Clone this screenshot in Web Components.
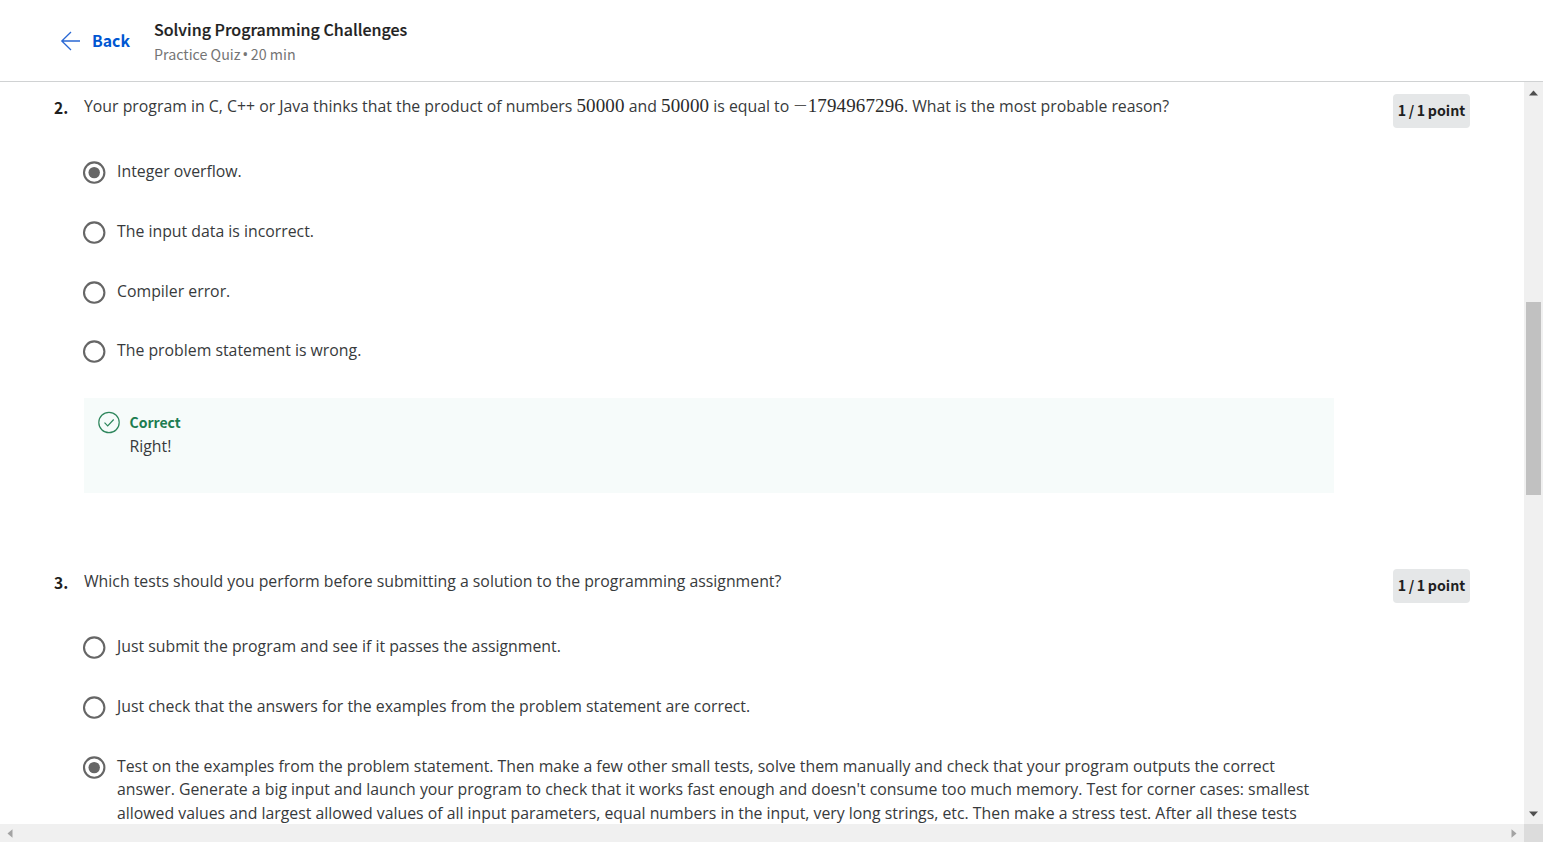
<!DOCTYPE html>
<html lang="en">
<head>
<meta charset="utf-8">
<title>Solving Programming Challenges</title>
<style>
html,body{margin:0;height:100%;overflow:hidden;background:#fff}
body{font-family:"Open Sans","Noto Sans",sans-serif;font-size:15.83px;color:#373a3c}
quiz-page{--ui:"Noto Sans CJK SC","Open Sans",sans-serif}
.sep{font-family:"Open Sans",sans-serif;font-size:16px;line-height:1;margin:0 -.7px 0 -1.4px}
</style>
</head>
<body>
<quiz-page>
  <quiz-header slot="header">
    <span slot="title">Solving Programming Challenges</span>
    <span slot="meta">Practice Quiz <span class="sep">•</span> 20 min</span>
  </quiz-header>
  <quiz-question number="2.">
    <span slot="prompt">Your program in C, C++ or Java thinks that the product of numbers <math-num>50000</math-num> and <math-num>50000</math-num> is equal to <math-num><math-minus>−</math-minus>1794967296</math-num>. What is the most probable reason?</span>
    <quiz-option checked>Integer overflow.</quiz-option>
    <quiz-option>The input data is incorrect.</quiz-option>
    <quiz-option>Compiler error.</quiz-option>
    <quiz-option>The problem statement is wrong.</quiz-option>
    <quiz-feedback slot="feedback"><span slot="title">Correct</span>Right!</quiz-feedback>
  </quiz-question>
  <quiz-question number="3.">
    <span slot="prompt">Which tests should you perform before submitting a solution to the programming assignment?</span>
    <quiz-option>Just submit the program and see if it passes the assignment.</quiz-option>
    <quiz-option>Just check that the answers for the examples from the problem statement are correct.</quiz-option>
    <quiz-option checked>Test on the examples from the problem statement. Then make a few other small tests, solve them manually and check that your program outputs the correct<br>answer. Generate a big input and launch your program to check that it works fast enough and doesn't consume too much memory. Test for corner cases: smallest<br>allowed values and largest allowed values of all input parameters, equal numbers in the input, very long strings, etc. Then make a stress test. After all these tests</quiz-option>
  </quiz-question>
</quiz-page>
<script>
const define=(name,html)=>{
  const t=document.createElement('template');t.innerHTML=html;
  customElements.define(name,class extends HTMLElement{
    constructor(){super();this.attachShadow({mode:'open'}).append(t.content.cloneNode(true));}
    connectedCallback(){const n=this.shadowRoot.querySelector('.number');if(n)n.textContent=this.getAttribute('number');}
  });
};
define('quiz-page',`<style>
:host{display:grid;grid-template:82px minmax(0,1fr) 18px/minmax(0,1fr) 19px;width:100%;height:842px;overflow:hidden}
header{grid-column:1/3;border-bottom:1px solid #d0d2d3;box-sizing:border-box;background:#fff}
main{overflow:hidden}
.v,.h{background:#f0f0f0;display:flex;align-items:center;justify-content:space-between;box-sizing:border-box}
.v{flex-direction:column;padding:8px 0 7px}.h{padding:0 7px 0 7px}
.thumb{width:15px;height:193px;background:#c1c1c1;margin:0 0 110px}
.corner{background:#dcdcdc}svg{display:block}
</style><header><slot name="header"></slot></header><main><slot></slot></main>
<div class="v"><svg width="9" height="6"><path d="M0 5.5 4.5 .5 9 5.5z" fill="#505050"/></svg><div class="thumb"></div><svg width="9" height="6"><path d="M0 0.5H9L4.5 5.5z" fill="#505050"/></svg></div>
<div class="h"><svg width="6" height="9"><path d="M5.5 .3V8.7L.5 4.5z" fill="#a3a3a3"/></svg><svg width="6" height="9"><path d="M.5 .3V8.7L5.5 4.5z" fill="#a3a3a3"/></svg></div><div class="corner"></div>`);
define('quiz-header',`<style>
:host{display:flex;height:81px;padding-left:60px;box-sizing:border-box;font-family:var(--ui)}
.back{display:flex;align-items:center;width:94px;color:#0056d2;font-weight:700;font-size:15.8px}
.back svg{margin-right:12px;flex:none}.back span{line-height:24px;margin-top:1px}
.info{padding-top:17px}.title{color:#1f1f1f;font-size:16.02px;font-weight:500;-webkit-text-stroke:.2px #1f1f1f;line-height:24px;white-space:nowrap}
.meta{color:#757575;font-size:14.25px;line-height:24px;height:24px;margin-top:1px;white-space:nowrap}
</style><div class="back"><svg width="20" height="20" viewBox="0 0 20 20" fill="none" stroke="#2a68d4" stroke-width="1.3"><path d="M1.5 10H20M11 1 1.8 10 11 19"/></svg><span>Back</span></div>
<div class="info"><div class="title"><slot name="title"></slot></div><div class="meta"><slot name="meta"></slot></div></div>`);
define('math-num',`<style>:host{display:inline;font:19px/1 "Liberation Serif",serif;letter-spacing:.12px;color:#2b2b2b}</style><slot></slot>`);
define('math-minus',`<style>:host{display:inline-block;width:14.4px;text-align:center;color:#555}span{display:inline-block;transform:scaleX(1.28)}</style><span><slot></slot></span>`);
define('quiz-question',`<style>
:host{display:grid;grid-template-columns:30px 1250px auto;padding-left:54px;height:475px;box-sizing:border-box;align-content:start}
.number{font:700 15.6px/24px var(--ui);color:#1f1f1f;padding-top:13px}
.prompt{line-height:24px;padding-top:12px;white-space:nowrap}
.points{justify-self:start;margin:12px 0 0 59px;width:77px;height:33.5px;border-radius:4px;background:#e5e7e8;color:#1f1f1f;font:700 14.2px/33px var(--ui);word-spacing:-.6px;text-align:center;white-space:nowrap}
.options{grid-column:2/4;padding-top:32.75px;display:flex;flex-direction:column;gap:34.7px}
.feedback{grid-column:2}
</style><div class="number"></div><div class="prompt"><slot name="prompt"></slot></div><div class="points">1 / 1 point</div>
<div class="options"><slot></slot></div><div class="feedback"><slot name="feedback"></slot></div>`);
define('quiz-option',`<style>
:host{display:flex;min-height:25px;line-height:23.7px;margin-left:-2px;white-space:nowrap}
svg{flex:none;margin:1px 11px 0 0}.dot{display:none}:host([checked]) .dot{display:block}
</style><svg width="24" height="24" viewBox="0 0 24 24"><circle cx="12.2" cy="11.6" r="10.2" fill="none" stroke="#666" stroke-width="2.1"/><circle class="dot" cx="12.2" cy="11.6" r="5.7" fill="#666"/></svg><div><slot></slot></div>`);
define('quiz-feedback',`<style>
:host{display:flex;background:#f6fbfa;height:95px;margin-top:33.3px;box-sizing:border-box;padding:12px 14px}
svg{margin:1px 9.5px 0 0;flex:none}.t{color:#1d7c50;font:700 14px/24px var(--ui)}.b{line-height:24px}
</style><svg width="22" height="23" viewBox="0 0 22 23" fill="none" stroke="#2e865c" stroke-width="1.2"><circle cx="11" cy="11.5" r="10.2"/><path d="m6.5 11.7 3.2 3.3 6-6.5"/></svg><div><div class="t"><slot name="title"></slot></div><div class="b"><slot></slot></div></div>`);
</script>
</body>
</html>
